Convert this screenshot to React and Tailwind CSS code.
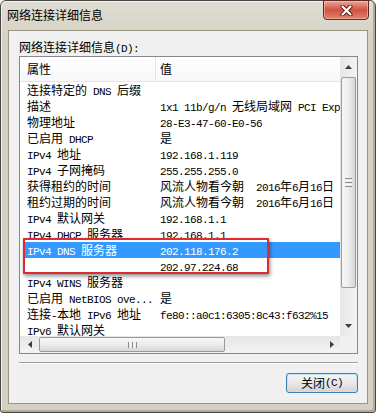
import React from 'react';

const rows = [
  ['连接特定的 DNS 后缀', ''],
  ['描述', '1x1 11b/g/n 无线局域网 PCI Express'],
  ['物理地址', '28-E3-47-60-E0-56'],
  ['已启用 DHCP', '是'],
  ['IPv4 地址', '192.168.1.119'],
  ['IPv4 子网掩码', '255.255.255.0'],
  ['获得租约的时间', '风流人物看今朝  2016年6月16日'],
  ['租约过期的时间', '风流人物看今朝  2016年6月16日'],
  ['IPv4 默认网关', '192.168.1.1'],
  ['IPv4 DHCP 服务器', '192.168.1.1'],
  ['IPv4 DNS 服务器', '202.118.176.2'],
  ['', '202.97.224.68'],
  ['IPv4 WINS 服务器', ''],
  ['已启用 NetBIOS ove...', '是'],
  ['连接-本地 IPv6 地址', 'fe80::a0c1:6305:8c43:f632%15'],
  ['IPv6 默认网关', ''],
];

const SELECTED = 10;

// ascii runs get the narrow half-width look of the system font
function T({ s }) {
  const parts = s.split(/([\x20-\x7e]+)/).filter(Boolean);
  return parts.map((p, i) =>
    /^[\x20-\x7e]+$/.test(p) ? (
      <span key={i} className="whitespace-pre text-[11px] leading-[12px] tracking-[-0.6px] [font-family:'Liberation_Mono',monospace]">
        {p}
      </span>
    ) : (
      <span key={i}>{p}</span>
    )
  );
}

function Arrow({ dir }) {
  const pts = {
    up: '0,4 3.5,0 7,4',
    down: '0,0 3.5,4 7,0',
    left: '4,0 0,3.5 4,7',
    right: '0,0 4,3.5 0,7',
  }[dir];
  const vert = dir === 'up' || dir === 'down';
  return (
    <svg width={vert ? 7 : 4} height={vert ? 4 : 7} viewBox={vert ? '0 0 7 4' : '0 0 4 7'}>
      <polygon points={pts} fill="#3c3c3c" />
    </svg>
  );
}

function CloseButton() {
  return (
    <div className="mr-[6px] -mt-px flex h-[20px] w-[46px] items-center justify-center rounded-b-[4px] border border-[#5e2a22] bg-gradient-to-b from-[#e9a697] via-[#cf5140] via-50% to-[#e0836a] shadow-[inset_0_0_0_1px_rgba(255,220,210,0.45)]">
      <svg width="13" height="11" viewBox="0 0 13 11">
        <path d="M2.5 1.5 L10.5 9.5 M10.5 1.5 L2.5 9.5" stroke="#5a1d15" strokeWidth="4" strokeLinecap="round" />
        <path d="M2.5 1.5 L10.5 9.5 M10.5 1.5 L2.5 9.5" stroke="#ffffff" strokeWidth="2.2" strokeLinecap="round" />
      </svg>
    </div>
  );
}

function VScroll() {
  return (
    <div className="flex w-[17px] shrink-0 flex-col bg-gradient-to-r from-[#e6e6e6] to-[#f3f3f3]">
      <div className="flex h-[17px] shrink-0 items-center justify-center pt-[3px]">
        <Arrow dir="up" />
      </div>
      <div className="flex-1">
        <div className="mx-[1px] mt-[3px] flex h-[211px] flex-col items-center justify-center gap-[1px] rounded-[2px] border border-[#9a9a9a] bg-gradient-to-r from-[#f7f7f7] via-[#ececec] to-[#d8d8d8]">
          <div className="h-px w-[7px] bg-[#8a8a8a]" />
          <div className="h-px w-[7px] bg-[#fafafa]" />
          <div className="h-px w-[7px] bg-[#8a8a8a]" />
          <div className="h-px w-[7px] bg-[#fafafa]" />
          <div className="h-px w-[7px] bg-[#8a8a8a]" />
        </div>
      </div>
      <div className="flex h-[17px] shrink-0 items-center justify-center pb-[4px]">
        <Arrow dir="down" />
      </div>
    </div>
  );
}

function HScroll() {
  return (
    <div className="flex h-[17px] w-[320px] items-stretch bg-gradient-to-b from-[#e6e6e6] to-[#f3f3f3]">
      <div className="flex w-[17px] shrink-0 items-center justify-center pl-[3px]">
        <Arrow dir="left" />
      </div>
      <div className="flex-1 py-[1px]">
        <div className="ml-[2px] flex h-full w-[186px] items-center justify-center gap-[1px] rounded-[2px] border border-[#9a9a9a] bg-gradient-to-b from-[#f7f7f7] via-[#ececec] to-[#d6d6d6]">
          <div className="h-[6px] w-px bg-[#8a8a8a]" />
          <div className="h-[6px] w-px bg-[#fafafa]" />
          <div className="h-[6px] w-px bg-[#8a8a8a]" />
          <div className="h-[6px] w-px bg-[#fafafa]" />
          <div className="h-[6px] w-px bg-[#8a8a8a]" />
        </div>
      </div>
      <div className="flex w-[17px] shrink-0 items-center justify-center pl-[1px]">
        <Arrow dir="right" />
      </div>
    </div>
  );
}

export default function App() {
  return (
    <div className="h-[413px] w-[376px] overflow-hidden bg-white text-[12px] leading-[16px] text-black [font-family:'Noto_Sans_CJK_SC',sans-serif]">
      <div className="flex h-full flex-col rounded-t-[6px] rounded-b-[3px] border border-[#474747] bg-gradient-to-b from-[#e0ddd3] to-[#d4d0c4] to-[40px] shadow-[inset_-2px_-2px_0_#b2ab94,inset_1px_1px_0_#f2f0ea]">
        <div className="flex h-[29px] shrink-0 items-start justify-between">
          <span className="pl-[6px] pt-[6px]">网络连接详细信息</span>
          <CloseButton />
        </div>

        <div className="mx-[7px] flex h-[374px] shrink-0 flex-col border border-[#9b9581] bg-[#f0f0f0] pl-[10px] pr-[9px] pt-[8px]">
          <div className="h-[17px]">
            网络连接详细信息<T s="(D):" />
          </div>

          <div className="flex h-[298px] flex-col border border-[#828790] bg-white">
            <div className="flex h-[279px]">
              <div className="relative w-[320px] overflow-hidden">
                <div className="flex h-[25px] border-b border-[#e5e5e5] bg-gradient-to-b from-white to-[#f7f8fa]">
                  <div className="flex w-[135px] items-center pl-[7px]">属性</div>
                  <div className="w-px bg-[#e3e4e6]" />
                  <div className="flex items-center pl-[4px]">值</div>
                </div>

                {rows.map(([k, v], i) => (
                  <div
                    key={i}
                    className={`ml-[4px] flex h-[16px] items-center whitespace-nowrap ${
                      i === SELECTED ? 'bg-[#3399ff] text-white' : ''
                    }`}
                  >
                    <div className="w-[136px] shrink-0 pl-[3px]">
                      <T s={k} />
                    </div>
                    <div className="shrink-0">
                      <T s={v} />
                    </div>
                  </div>
                ))}

                <div className="absolute left-[3px] top-[181px] h-[36px] w-[246px] border-2 border-[#dc2b31] shadow-[1px_2px_4px_rgba(0,0,0,0.45)]" />
              </div>
              <VScroll />
            </div>
            <div className="flex">
              <HScroll />
              <div className="h-[17px] w-[17px] bg-[#f0f0f0]" />
            </div>
          </div>

          <div className="mt-[8px] h-[2px] border-t border-b border-t-[#a0a0a0] border-b-white" />

          <div className="mt-[9px] flex justify-end">
            <button
              type="button"
              className="flex h-[20px] w-[72px] items-center justify-center rounded-[3px] border border-[#3c7fb1] bg-gradient-to-b from-[#f4f4f4] via-[#e9e9e9] via-50% to-[#d3d3d3] shadow-[inset_0_0_0_1px_#bfe4f8]"
            >
              关闭<T s="(C)" />
            </button>
          </div>
        </div>
      </div>
    </div>
  );
}
